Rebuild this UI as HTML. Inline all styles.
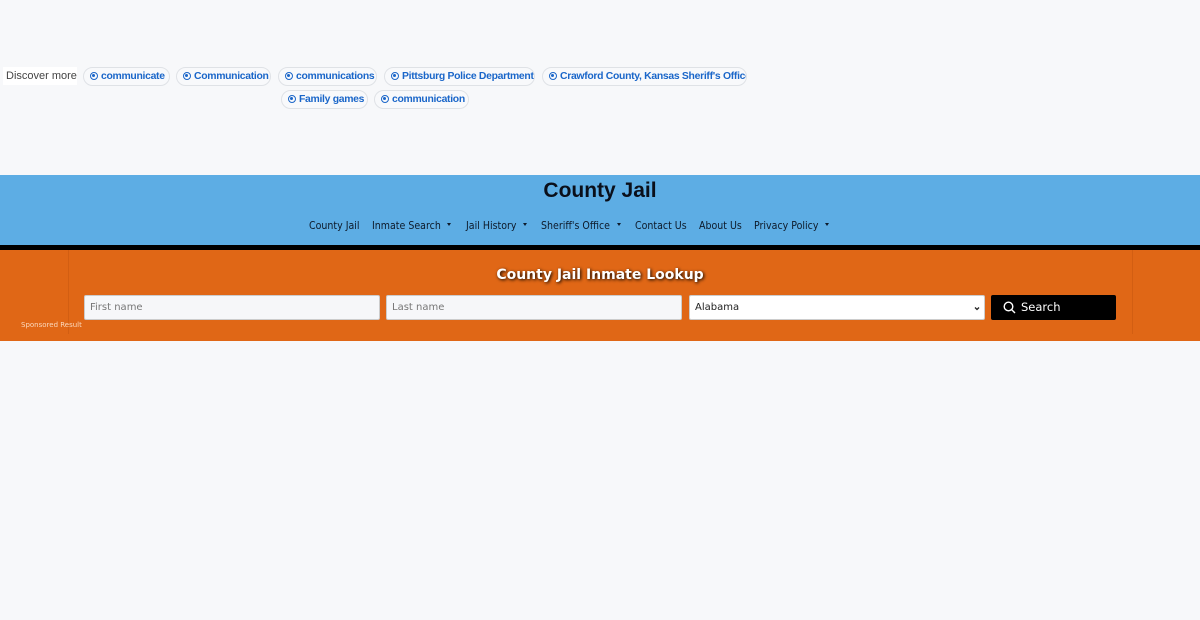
<!DOCTYPE html>
<html><head><style>
*{box-sizing:border-box;margin:0;padding:0}
body{width:1200px;height:620px;background:#f7f8fa;position:relative;overflow:hidden;font-family:"DejaVu Sans","Liberation Sans",sans-serif}
.a{position:absolute}
.chip{position:absolute;height:19px;border:1px solid #dfe2e6;border-radius:10px;background:#f8f9fb;color:#1a66c9;font:bold 10.4px "Liberation Sans",sans-serif;letter-spacing:-0.3px;line-height:17px;padding-left:6px;white-space:nowrap;overflow:hidden}
.chip i{display:inline-block;width:8px;height:8px;border:1.2px solid #1a66c9;border-radius:50%;margin-right:3px;vertical-align:-1px;position:relative}
.chip i:after{content:"";position:absolute;left:1.3px;top:1.3px;width:3px;height:3px;border-radius:50%;background:#1a66c9}
.n{position:absolute;top:219px;font-size:11px;color:#0d1a2a;white-space:nowrap;transform:scaleX(0.86);transform-origin:left}
.c{position:absolute;top:223px;width:0;height:0;border-left:2.5px solid transparent;border-right:2.5px solid transparent;border-top:3px solid #0d1a2a}
.in{position:absolute;top:295px;height:25px;background:#f6f7f9;border:1px solid #ccc;border-radius:2px;font-size:10px;color:#777;padding-left:5px;line-height:23px}
</style></head><body>
<div class="a" style="left:3px;top:67px;width:74px;height:18px;background:#fff;font:11px 'Liberation Sans',sans-serif;color:#444;line-height:18px;padding-left:3px;white-space:nowrap">Discover more</div>
<div class="chip" style="left:83px;top:67px;width:87px"><i></i>communicate</div>
<div class="chip" style="left:176px;top:67px;width:95px"><i></i>Communication</div>
<div class="chip" style="left:278px;top:67px;width:99px"><i></i>communications</div>
<div class="chip" style="left:384px;top:67px;width:151px"><i></i>Pittsburg Police Department</div>
<div class="chip" style="left:542px;top:67px;width:205px"><i></i>Crawford County, Kansas Sheriff's Office</div>
<div class="chip" style="left:281px;top:90px;width:87px"><i></i>Family games</div>
<div class="chip" style="left:374px;top:90px;width:95px"><i></i>communication</div>

<div class="a" style="left:0;top:175px;width:1200px;height:70px;background:#5dade4"></div>
<div class="a" style="left:0;top:179px;width:1200px;text-align:center;font:bold 21px 'Liberation Sans',sans-serif;color:#0a0f1a">County Jail</div>
<div class="n" style="left:309px">County Jail</div>
<div class="n" style="left:372px">Inmate Search</div><div class="c" style="left:447px"></div>
<div class="n" style="left:466px">Jail History</div><div class="c" style="left:523px"></div>
<div class="n" style="left:541px">Sheriff's Office</div><div class="c" style="left:617px"></div>
<div class="n" style="left:635px">Contact Us</div>
<div class="n" style="left:699px">About Us</div>
<div class="n" style="left:754px">Privacy Policy</div><div class="c" style="left:825px"></div>
<div class="a" style="left:0;top:245px;width:1200px;height:5px;background:#000"></div>
<div class="a" style="left:0;top:250px;width:1200px;height:91px;background:#e06716"></div>
<div class="a" style="left:68px;top:250px;width:1px;height:84px;background:#d25e12"></div>
<div class="a" style="left:1132px;top:250px;width:1px;height:84px;background:#d25e12"></div>
<div class="a" style="left:0;top:267px;width:1200px;text-align:center;font-weight:bold;font-size:14px;color:#fff;text-shadow:1px 1px 3px #000">County Jail Inmate Lookup</div>
<div class="a" style="left:21px;top:321px;font-size:7px;color:#fbd9bd">Sponsored Result</div>
<div class="in" style="left:84px;width:296px">First name</div>
<div class="in" style="left:386px;width:296px">Last name</div>
<div class="in" style="left:689px;width:296px;background:#fff;color:#222">Alabama<svg style="position:absolute;right:4px;top:10px" width="6" height="5" viewBox="0 0 6 5"><path d="M1 1.5L3 3.5L5 1.5" fill="none" stroke="#222" stroke-width="1.3"/></svg></div>
<div class="a" style="left:991px;top:295px;width:125px;height:25px;background:#000;border-radius:2px;color:#fff;font-size:11.5px;line-height:24px;padding-left:30px">Search
<svg style="position:absolute;left:12px;top:6px" width="13" height="13" viewBox="0 0 13 13"><circle cx="5.5" cy="5.5" r="4.3" fill="none" stroke="#fff" stroke-width="1.4"/><path d="M8.6 8.6L12 12" stroke="#fff" stroke-width="1.4"/></svg></div>
</body></html>
